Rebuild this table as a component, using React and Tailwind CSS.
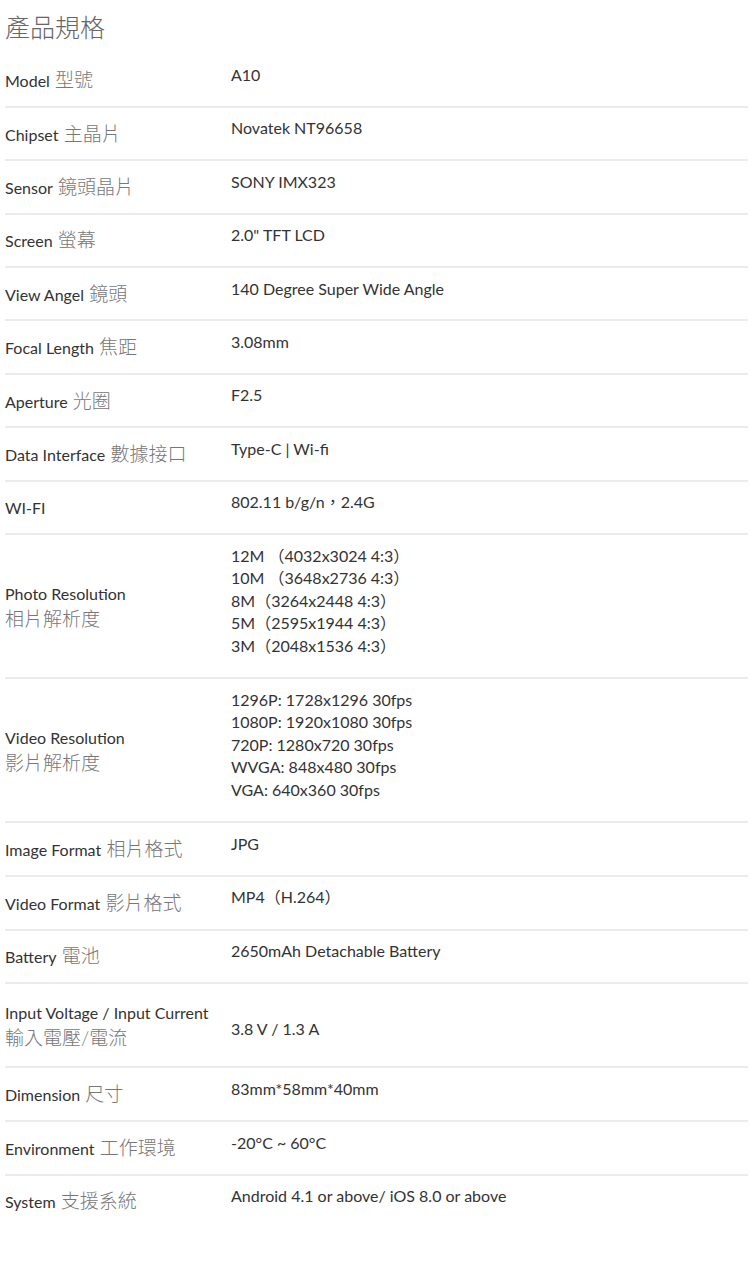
const specs = [
  { en: "Model", zh: "型號", value: ["A10"] },
  { en: "Chipset", zh: "主晶片", value: ["Novatek NT96658"] },
  { en: "Sensor", zh: "鏡頭晶片", value: ["SONY IMX323"] },
  { en: "Screen", zh: "螢幕", value: ['2.0" TFT LCD'] },
  { en: "View Angel", zh: "鏡頭", value: ["140 Degree Super Wide Angle"] },
  { en: "Focal Length", zh: "焦距", value: ["3.08mm"] },
  { en: "Aperture", zh: "光圈", value: ["F2.5"] },
  { en: "Data Interface", zh: "數據接口", value: ["Type-C | Wi-fi"] },
  { en: "WI-FI", zh: "", value: ["802.11 b/g/n，2.4G"] },
  {
    en: "Photo Resolution",
    zh: "相片解析度",
    stacked: true,
    value: [
      "12M （4032x3024 4:3）",
      "10M （3648x2736 4:3）",
      "8M（3264x2448 4:3）",
      "5M（2595x1944 4:3）",
      "3M（2048x1536 4:3）",
    ],
  },
  {
    en: "Video Resolution",
    zh: "影片解析度",
    stacked: true,
    value: [
      "1296P: 1728x1296 30fps",
      "1080P: 1920x1080 30fps",
      "720P: 1280x720 30fps",
      "WVGA: 848x480 30fps",
      "VGA: 640x360 30fps",
    ],
  },
  { en: "Image Format", zh: "相片格式", value: ["JPG"] },
  { en: "Video Format", zh: "影片格式", value: ["MP4（H.264）"] },
  { en: "Battery", zh: "電池", value: ["2650mAh Detachable Battery"] },
  {
    en: "Input Voltage / Input Current",
    zh: "輸入電壓/電流",
    stacked: true,
    tall: true,
    value: ["3.8 V / 1.3 A"],
  },
  { en: "Dimension", zh: "尺寸", value: ["83mm*58mm*40mm"] },
  { en: "Environment", zh: "工作環境", value: ["-20°C ~ 60°C"] },
  { en: "System", zh: "支援系統", value: ["Android 4.1 or above/ iOS 8.0 or above"] },
];

const valuePadding = (spec, index) => {
  if (spec.tall) return "pt-[16px] pb-[8px]";
  if (spec.value.length > 1) return "pt-[9.6px] pb-[20px]";
  if (index > 10) return "pt-[9.6px] pb-[19.6px]";
  return "pt-[9.6px] pb-[19.3px]";
};

const SpecRow = ({ spec, index, last }) => {
  return (
    <div
      className={
        "flex items-center " +
        (last ? "border-b-2 border-transparent" : "border-b-2 border-[#ebebeb]")
      }
    >
      <div
        className={
          "w-[226px] shrink-0 text-[16px] leading-[25px] text-[#333] " +
          (spec.tall ? "py-[16px]" : "")
        }
      >
        <span>{spec.en}</span>
        {spec.zh &&
          (spec.stacked ? (
            <div className="text-[19px] font-light text-[#777]">{spec.zh}</div>
          ) : (
            <span className="text-[19px] font-light text-[#777]"> {spec.zh}</span>
          ))}
      </div>

      <div className={"text-[16px] leading-[22.5px] text-[#333] " + valuePadding(spec, index)}>
        {spec.value.map((line) => (
          <div key={line}>{line}</div>
        ))}
      </div>
    </div>
  );
};

export default function App() {
  return (
    <div className="min-h-[1265px] w-[750px] bg-white pl-[5px] pr-[2px] font-['Lato','Noto_Sans_CJK_TC',sans-serif]">
      <div className="flex h-[54.5px] items-center">
        <h1 className="text-[25px] font-light leading-none text-[#666]">產品規格</h1>
      </div>

      <div>
        {specs.map((spec, i) => (
          <SpecRow key={spec.en} spec={spec} index={i} last={i === specs.length - 1} />
        ))}
      </div>
    </div>
  );
}
